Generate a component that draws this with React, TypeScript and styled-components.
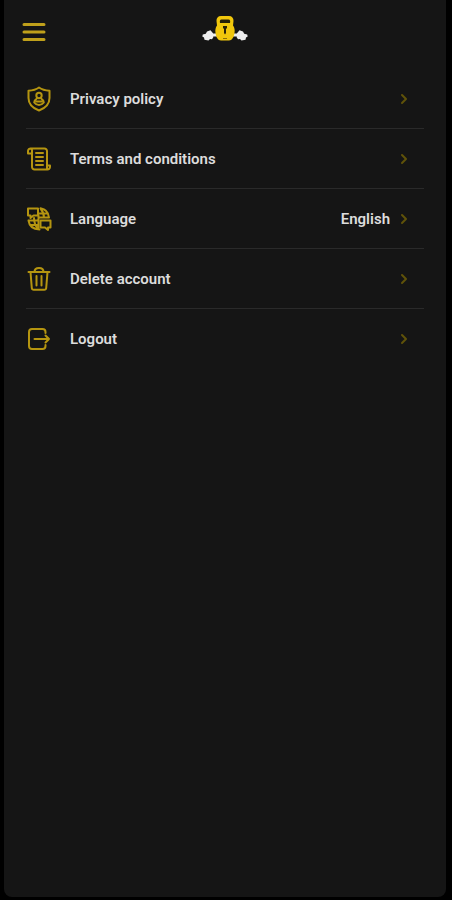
import React from "react";
import styled, { createGlobalStyle } from "styled-components";

const GlobalStyle = createGlobalStyle`
  *, *::before, *::after { box-sizing: border-box; }
  body {
    margin: 0;
    background: #000;
    font-family: Roboto, sans-serif;
  }
`;

const Screen = styled.div`
  display: flex;
  flex-direction: column;
  min-height: 100vh;
  padding: 0 6px 3px 4px;
`;

const Panel = styled.div`
  flex: 1;
  background: #151515;
  border-radius: 0 0 8px 8px;
`;

const Header = styled.header`
  display: grid;
  grid-template-columns: 1fr auto 1fr;
  align-items: center;
  height: 64px;
  padding: 0 18px;
`;

const MenuButton = styled.button`
  display: flex;
  justify-self: start;
  padding: 0;
  border: 0;
  background: none;
  color: #bfa01b;
  cursor: pointer;
`;

const LogoMark = styled.svg`
  display: block;
  width: 46px;
  height: 28px;
  margin-bottom: 6px;
`;

const List = styled.ul`
  list-style: none;
  margin: 0;
  padding: 5px 22px 0;
`;

const Item = styled.li`
  height: 60px;
  border-bottom: 1px solid #2a2a2a;

  &:last-child {
    border-bottom-color: transparent;
  }
`;

const RowButton = styled.button`
  display: flex;
  align-items: center;
  width: 100%;
  height: 100%;
  padding: 0 14px 0 0;
  border: 0;
  background: none;
  color: #dcdcdc;
  font: 600 15px/20px Roboto, sans-serif;
  text-align: left;
  cursor: pointer;
`;

const Icon = styled.svg<{ $size?: number }>`
  display: block;
  flex: none;
  width: ${({ $size = 26 }) => $size}px;
  height: ${({ $size = 26 }) => $size}px;
  fill: none;
  stroke: currentColor;
  stroke-width: 2;
  stroke-linecap: round;
  stroke-linejoin: round;
`;

const RowIcon = styled(Icon)`
  margin-right: 18px;
  color: #b59510;
`;

const Label = styled.span`
  flex: 1;
`;

const Value = styled.span`
  margin-right: 8px;
`;

const Chevron = styled(Icon)`
  color: #5f5209;
`;

const ShieldIcon = () => (
  <RowIcon viewBox="0 0 26 26" aria-hidden="true">
    <path d="M13 1.5c-3 2.2-6 3-10.500 3.300V12c0 6 3.800 10 10.500 12.500C19.700 22 23.500 18 23.500 12V4.800C19 4.500 16 3.700 13 1.500z" />
    <circle cx="13" cy="9.500" r="2.700" />
    <path d="M10.500 12.800c-1.500.8-2.300 2.200-2.300 3.700 1.500 2 3 2.500 4.800 2.500s3.300-.5 4.800-2.500c0-1.500-.8-2.900-2.300-3.700M10.500 15.500h5" />
  </RowIcon>
);

const ScrollIcon = () => (
  <RowIcon viewBox="0 0 26 26" aria-hidden="true">
    <path d="M6 7.500H2V5a2.500 2.500 0 0 1 2.500-2.500H18.500A2.500 2.500 0 0 1 21 5V19.500h3V21a2.500 2.500 0 0 1-2.500 2.500H8.500A2.500 2.500 0 0 1 6 21V5M4.500 2.500A2 2 0 0 1 6 5M21 19.500v3" />
    <path d="M10 7h7M10 11h7M10 15h7M10 19h7" />
  </RowIcon>
);

const LanguageIcon = () => (
  <RowIcon viewBox="0 0 26 26" aria-hidden="true">
    <path d="M2 2.500h10v7H7.500L4.500 12V9.500H2z" />
    <path d="M14.500 14.500h10v7H22V24l-3-2.500h-4.500z" />
    <path d="M14.500 2.300c5 .8 8 4.500 8.500 9.200M2.500 14.500c.8 5.500 5 8.800 11 9M12 7.500h9M3 14.500h8.500M5 19h6.500M12.500 9.500v13.500M14.500 2.500c2.200 2.500 3.300 5.500 3.500 9M8 12c0 4 1.500 8 4 11M12.500 11.500H23" />
  </RowIcon>
);

const TrashIcon = () => (
  <RowIcon viewBox="0 0 26 26" aria-hidden="true">
    <path d="M2.500 6h21M8.500 6c0-2.500 1.500-4 4.500-4s4.500 1.500 4.500 4M4.500 6l1.300 16a2 2 0 0 0 2 1.800h10.400a2 2 0 0 0 2-1.800L21.500 6M10.500 10v9.500M15.500 10v9.500" />
  </RowIcon>
);

const LogoutIcon = () => (
  <RowIcon viewBox="0 0 26 26" aria-hidden="true">
    <path d="M19.500 7V6a3 3 0 0 0-3-3H6a3 3 0 0 0-3 3v14a3 3 0 0 0 3 3h10.500a3 3 0 0 0 3-3v-1M8.500 13H23M19.500 9.500L23 13l-3.500 3.500" />
  </RowIcon>
);

const Logo = () => (
  <LogoMark viewBox="0 0 46 28" role="img" aria-label="Kettlebell and dumbbell logo">
    <g fill="#ededed">
      <path d="M9 18.500h28v3H9z" />
      <path d="M5 16.500l3.500-1.200 2.500 3 .3 4-1.300 2-2-.3-1.500 1.500-4-.8-.5-2.200L.3 21.500.8 19.500l3-.8z" />
      <path d="M41 16.500l-3.500-1.200-2.500 3-.3 4 1.300 2 2-.3 1.500 1.500 4-.8.5-2.200 1.700-1-.5-2-3-.8z" />
    </g>
    <path
      d="M19 1h8c3 0 4.700 2 4.500 5L31 10.500c1.500 2 2 4.500 1.500 7.500-.5 4-2.500 7.500-5.500 7.500h-8c-3 0-5-3.500-5.500-7.500-.5-3 0-5.500 1.500-7.500L14.500 6c-.2-3 1.500-5 4.500-5z"
      fill="#f1c70c"
    />
    <path d="M19.500 4.500h7c1.500 0 2 1.500 1.500 3.500H18c-.5-2 0-3.500 1.500-3.500z" fill="#241f09" />
    <path d="M21 11h4v2l-1 1v4l-1 1.500-1-1.500v-4l-1-1z" fill="#282109" />
    <path d="M21 23.500h4" stroke="#8b7208" strokeWidth="1" />
  </LogoMark>
);

const items = [
  { label: "Privacy policy", icon: <ShieldIcon /> },
  { label: "Terms and conditions", icon: <ScrollIcon /> },
  { label: "Language", icon: <LanguageIcon />, value: "English" },
  { label: "Delete account", icon: <TrashIcon /> },
  { label: "Logout", icon: <LogoutIcon /> },
];

export default function App() {
  return (
    <>
      <GlobalStyle />
      <Screen>
        <Panel>
          <Header>
            <MenuButton type="button" aria-label="Open menu">
              <Icon $size={24} viewBox="0 0 24 24" aria-hidden="true">
                <path d="M2 4.500h20M2 12h20M2 19.500h20" strokeWidth="3" />
              </Icon>
            </MenuButton>
            <Logo />
          </Header>
          <nav aria-label="Settings">
            <List>
              {items.map(({ label, icon, value }) => (
                <Item key={label}>
                  <RowButton type="button">
                    {icon}
                    <Label>{label}</Label>
                    {value && <Value>{value}</Value>}
                    <Chevron $size={12} viewBox="0 0 12 12" aria-hidden="true">
                      <path d="M4 2l4 4-4 4" />
                    </Chevron>
                  </RowButton>
                </Item>
              ))}
            </List>
          </nav>
        </Panel>
      </Screen>
    </>
  );
}
